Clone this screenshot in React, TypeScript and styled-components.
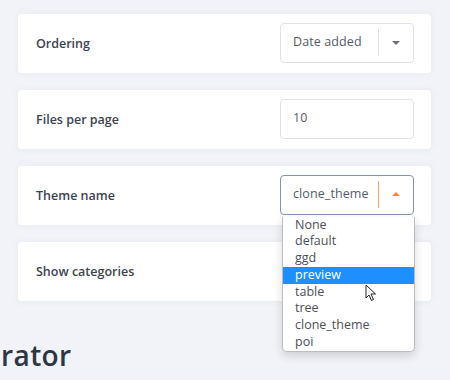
import React from "react";
import styled, { createGlobalStyle } from "styled-components";

const Global = createGlobalStyle`
  html, body { margin: 0; padding: 0; background: #f1f3f8; }
  body { font-family: "Open Sans", "Liberation Sans", sans-serif; width: 450px; height: 380px; overflow: hidden; }
`;

const Page = styled.div`
  padding: 14px 19px 0 18px;
  display: flex;
  flex-direction: column;
  gap: 17px;
`;

const Card = styled.div<{ $raised?: boolean }>`
  background: #fff;
  border-radius: 4px;
  height: 59px;
  padding: 0 17px 0 18px;
  display: flex;
  align-items: center;
  justify-content: space-between;
  position: relative;
  z-index: ${(p) => (p.$raised ? 3 : "auto")};
  box-shadow: 0 0 6px rgba(200, 206, 220, 0.25);
`;

const Label = styled.div`
  font-size: 12.5px;
  font-weight: 600;
  color: #3c4350;
`;

const Field = styled.div<{ $focus?: boolean }>`
  width: 134px;
  height: 40px;
  margin-top: -2px;
  box-sizing: border-box;
  border: 1px solid ${(p) => (p.$focus ? "#7d96b8" : "#dfe2e8")};
  border-radius: 4px;
  background: #fff;
  display: flex;
  align-items: center;
  position: relative;
`;

const FieldText = styled.div`
  flex: 1;
  padding-left: 12px;
  font-size: 12.5px;
  color: #555b66;
  letter-spacing: 0.1px;
  margin-top: -2px;
`;

const Sep = styled.div<{ $active?: boolean }>`
  width: 1px;
  height: 27px;
  background: ${(p) => (p.$active ? "#f5a261" : "#dcdfe4")};
`;

const ArrowBox = styled.div`
  width: 34px;
  display: flex;
  justify-content: center;
  align-items: center;
`;

const Caret = styled.div<{ $up?: boolean }>`
  width: 0;
  height: 0;
  border-left: 4px solid transparent;
  border-right: 4px solid transparent;
  ${(p) =>
    p.$up
      ? "border-bottom: 4px solid #f58a2a; margin-top: -1px;"
      : "border-top: 4px solid #6b707a; margin-top: 1px;"}
`;

const List = styled.ul`
  position: absolute;
  top: 41px;
  left: 1px;
  width: 133px;
  margin: 0;
  padding: 0;
  list-style: none;
  background: #fff;
  border: 1px solid #b9bcc2;
  border-top: none;
  border-radius: 0 0 5px 5px;
  box-shadow: 0 4px 10px rgba(0, 0, 0, 0.15);
  z-index: 5;
  box-sizing: border-box;
`;

const Item = styled.li<{ $sel?: boolean }>`
  height: 16.8px;
  line-height: 16.8px;
  padding-left: 12px;
  font-size: 12.5px;
  color: ${(p) => (p.$sel ? "#fff" : "#4a4f58")};
  background: ${(p) => (p.$sel ? "#1e8fff" : "transparent")};
`;

const Cursor = styled.svg`
  position: absolute;
  left: 84px;
  top: 108px;
  z-index: 6;
`;

const Heading = styled.h1`
  margin: 40px 0 0 1px;
  font-size: 28px;
  font-weight: 600;
  color: #2d3645;
  letter-spacing: 0.4px;
  line-height: 1;
`;

const options = ["None", "default", "ggd", "preview", "table", "tree", "clone_theme", "poi"];

export default function App() {
  return (
    <>
      <Global />
      <Page>
        <Card>
          <Label>Ordering</Label>
          <Field>
            <FieldText>Date added</FieldText>
            <Sep />
            <ArrowBox>
              <Caret />
            </ArrowBox>
          </Field>
        </Card>
        <Card>
          <Label>Files per page</Label>
          <Field>
            <FieldText>10</FieldText>
          </Field>
        </Card>
        <Card $raised>
          <Label>Theme name</Label>
          <Field $focus>
            <FieldText>clone_theme</FieldText>
            <Sep $active />
            <ArrowBox>
              <Caret $up />
            </ArrowBox>
            <List>
              {options.map((o) => (
                <Item key={o} $sel={o === "preview"}>
                  {o}
                </Item>
              ))}
            </List>
            <Cursor width="12" height="18" viewBox="0 0 12 18">
              <path d="M1 1 L1 14 L4 11 L6.5 16.5 L8.5 15.5 L6 10 L10.5 10 Z" fill="#fff" stroke="#222" strokeWidth="1" strokeLinejoin="round" />
            </Cursor>
          </Field>
        </Card>
        <Card>
          <Label>Show categories</Label>
        </Card>
      </Page>
      <Heading>rator</Heading>
    </>
  );
}
